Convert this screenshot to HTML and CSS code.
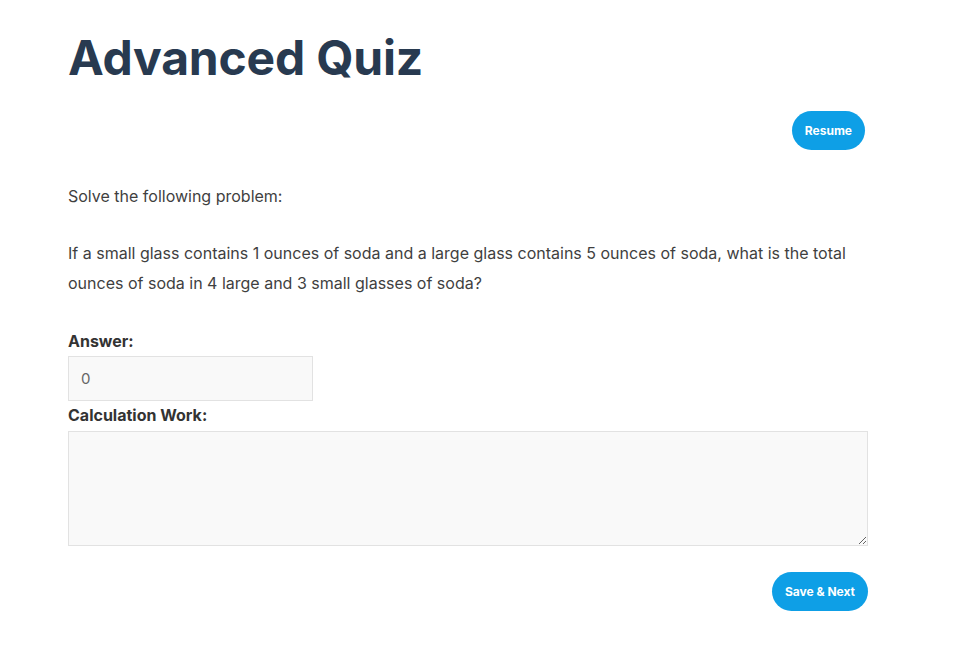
FILE: index.html
```html
<!DOCTYPE html>
<html lang="en">
<head>
  <meta charset="UTF-8">
  <meta name="viewport" content="width=device-width, initial-scale=1.0">
  <title>Advanced Quiz</title>
  <link rel="stylesheet" href="styles.css">
</head>
<body>
  <article class="quizPage">
    <h1 class="quizTitle">Advanced Quiz</h1>

    <section class="topBar">
      <button class="pillBtn resumeBtn">Resume</button>
    </section>

    <p class="prompt">Solve the following problem:</p>
    <p class="question">If a small glass contains 1 ounces of soda and a large glass contains 5 ounces of soda, what is the total ounces of soda in 4 large and 3 small glasses of soda?</p>

    <form class="answerForm">
      <label for="answer" class="fieldLabel">Answer:</label>
      <input type="text" id="answer" name="answer" class="answerInput" value="0">
      <label for="work" class="fieldLabel">Calculation Work:</label>
      <textarea id="work" name="work" class="workInput"></textarea>
      <section class="bottomBar">
        <button type="button" class="pillBtn">Save &amp; Next</button>
      </section>
    </form>
  </article>
</body>
</html>
```
FILE: styles.css
```css
body {
  margin: 0;
  font-family: Inter, "Noto Sans", sans-serif;
  color: #3f3f3f;
  background: #fff;
}

.quizPage {
  width: 800px;
  margin: 0 0 0 68px;
}

.quizTitle {
  margin: 0;
  padding-top: 30px;
  font-size: 48px;
  line-height: 56px;
  font-weight: 700;
  color: #283a50;
  letter-spacing: -0.2px;
}

.topBar {
  display: flex;
  justify-content: flex-end;
  padding: 25px 3px 0 0;
}

.pillBtn {
  border: 0;
  border-radius: 20px;
  background-color: #0e9fe6;
  color: white;
  font-family: Inter, sans-serif;
  font-size: 12px;
  font-weight: 700;
  height: 39px;
  padding: 0 13px;
  &:hover {
    cursor: pointer;
  }
}

.prompt, .question {
  margin: 0;
  font-size: 16px;
  line-height: 30px;
}

.prompt {
  padding-top: 31px;
}

.question {
  padding-top: 27px;
}

.answerForm {
  display: flex;
  flex-direction: column;
  padding-top: 33px;
}

.fieldLabel {
  font-size: 16px;
  font-weight: 700;
  color: #333;
  line-height: 20px;
}

.answerInput {
  width: 245px;
  height: 45px;
  box-sizing: border-box;
  margin: 5px 0 4px;
  padding: 0 12px;
  border: 1px solid #e2e2e2;
  background: #f9f9f9;
  font-family: Inter, sans-serif;
  font-size: 15px;
  color: #666;
}

.workInput {
  width: 800px;
  height: 115px;
  box-sizing: border-box;
  margin-top: 6px;
  border: 1px solid #e2e2e2;
  background: #f9f9f9;
}

.bottomBar {
  display: flex;
  justify-content: flex-end;
  padding-top: 26px;
}
```
